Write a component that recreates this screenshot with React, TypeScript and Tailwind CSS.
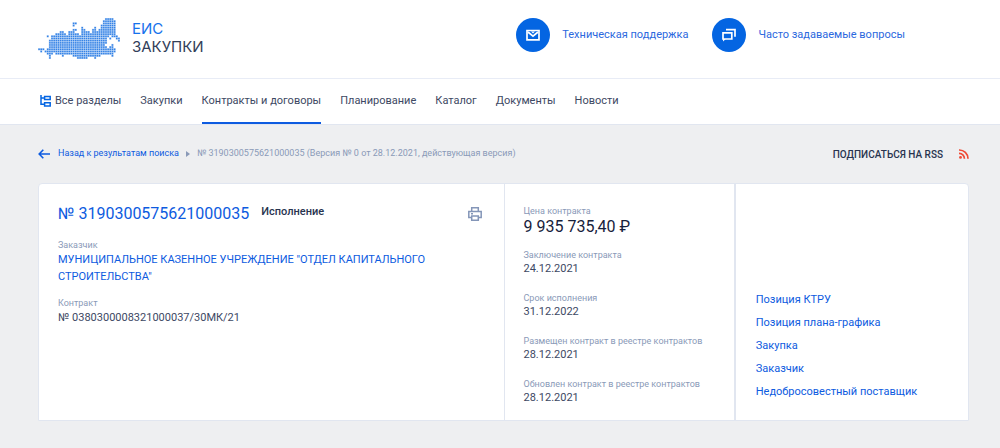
import type { ReactNode } from 'react';

// Filled column ranges of the dotted map, top row first
const mapRows: number[][][] = [
  [[31, 34]],
  [[30, 35]],
  [[16, 17], [30, 35]],
  [[16, 16], [29, 35]],
  [[20, 20], [26, 26], [29, 35]],
  [[16, 17], [20, 21], [25, 26], [28, 35]],
  [[10, 11], [14, 16], [20, 23], [25, 35]],
  [[8, 12], [14, 18], [20, 35]],
  [[4, 4], [6, 32], [34, 36]],
  [[6, 31], [33, 33], [36, 37]],
  [[5, 31], [37, 37]],
  [[5, 31]],
  [[5, 30], [34, 34]],
  [[5, 31], [33, 34]],
  [[0, 2], [4, 35]],
  [[1, 1], [3, 35]],
  [[4, 6], [8, 32], [33, 34]],
  [[5, 5], [11, 11], [16, 28], [34, 34]],
  [[5, 5], [18, 22], [26, 26]],
];

const navLinks = ['Закупки', 'Контракты и договоры', 'Планирование', 'Каталог', 'Документы', 'Новости'];

const dates = [
  { label: 'Заключение контракта', value: '24.12.2021' },
  { label: 'Срок исполнения', value: '31.12.2022' },
  { label: 'Размещен контракт в реестре контрактов', value: '28.12.2021' },
  { label: 'Обновлен контракт в реестре контрактов', value: '28.12.2021' },
];

const relatedLinks = ['Позиция КТРУ', 'Позиция плана-графика', 'Закупка', 'Заказчик', 'Недобросовестный поставщик'];

function Logo() {
  return (
    <a href="#" className="flex items-center gap-3 pt-[6px]">
      <svg viewBox="0 0 38 19" className="h-[41px] w-[82px]" fill="#3583e6" aria-hidden="true">
        <g opacity="0.35">
          {mapRows.map((spans, y) =>
            spans.map(([from, to]) => <rect key={`${y}-${from}`} x={from} y={y} width={to - from + 1} height="1" />),
          )}
        </g>
        {mapRows.map((spans, y) =>
          spans.map(([from, to]) =>
            Array.from({ length: to - from + 1 }, (_, i) => (
              <rect key={`${y}-${from + i}`} x={from + i + 0.15} y={y + 0.15} width="0.7" height="0.7" />
            )),
          ),
        )}
      </svg>
      <span className="font-['Inter',sans-serif] text-[15px] leading-[18px] text-[#334059]">
        <span className="block text-[#1672ec]">ЕИС</span>
        <span className="block">ЗАКУПКИ</span>
      </span>
    </a>
  );
}

function SupportLink({ label, children }: { label: string; children: ReactNode }) {
  return (
    <a href="#" className="flex items-center gap-3 text-[11px] text-[#2b68de]">
      <span className="flex size-[34px] items-center justify-center rounded-full bg-[#0465e2]">
        <svg viewBox="0 0 14 14" className="size-[14px]" fill="none" stroke="#fff" strokeWidth="1.7" aria-hidden="true">
          {children}
        </svg>
      </span>
      {label}
    </a>
  );
}

function Header() {
  return (
    <header className="flex h-[79px] items-center border-b border-[#e8ecf6] pr-[95px] pb-2 pl-[38px]">
      <Logo />
      <div className="ml-auto flex gap-6">
        <SupportLink label="Техническая поддержка">
          <path d="M1 2.5h12v9.3H1z" />
          <path d="M2 4l5 4.2L12 4" />
          <path d="M5 3.5h4L7 5.5z" fill="#fff" stroke="none" />
        </SupportLink>
        <SupportLink label="Часто задаваемые вопросы">
          <path d="M1 4.8h8.8v6.2H1zM4 1.6h9v7.2" />
          <path d="M1 11v2.4L3.8 11z" fill="#fff" stroke="none" />
        </SupportLink>
      </div>
    </header>
  );
}

function Nav() {
  return (
    <nav className="flex h-[45px] gap-[19px] pl-10 text-[11px] leading-[43px] text-[#3d4863]">
      <a href="#" className="flex items-center gap-1 pb-[2px]">
        <svg viewBox="0 0 11 12" className="h-3 w-[11px]" fill="none" stroke="#0465e2" strokeWidth="1.5" aria-hidden="true">
          <path d="M1 0v9.3h3.4M1 2.9h3.4M4.6 1.5h5.6v2.9H4.6zM4.6 7.7h5.6v3.2H4.6z" />
        </svg>
        Все разделы
      </a>
      {navLinks.map((label) => (
        <a
          key={label}
          href="#"
          className={
            label === 'Контракты и договоры' ? 'border-b-2 border-[#0d5be0]' : 'border-b-2 border-transparent'
          }
        >
          {label}
        </a>
      ))}
    </nav>
  );
}

function Breadcrumbs() {
  return (
    <div className="flex h-[58px] items-center text-[9px] text-[#8a9ab8]">
      <a href="#" className="flex items-center gap-2 text-[#0d5be0]">
        <svg viewBox="0 0 12 10" className="h-[10px] w-3" fill="none" stroke="currentColor" strokeWidth="1.6" aria-hidden="true">
          <path d="M12 5H1.2M5.3.8L1.2 5l4.1 4.2" />
        </svg>
        Назад к результатам поиска
      </a>
      <svg viewBox="0 0 4 6" className="mx-[7px] h-[6px] w-1" fill="currentColor" aria-hidden="true">
        <path d="M0 0l4 3-4 3z" />
      </svg>
      <span>№ 3190300575621000035 (Версия № 0 от 28.12.2021, действующая версия)</span>
      <a href="#" className="ml-auto flex items-center gap-4 text-[10px] font-medium text-[#28344f]">
        ПОДПИСАТЬСЯ НА RSS
        <svg viewBox="0 0 10 10" className="size-[10px]" fill="none" stroke="#ef4a35" strokeWidth="1.7" aria-hidden="true">
          <circle cx="1.5" cy="8.4" r="1.4" fill="#ef4a35" stroke="none" />
          <path d="M0 4.3a5.2 5.2 0 0 1 5.4 5.4M0 1a8.7 8.7 0 0 1 9 8.7" />
        </svg>
      </a>
    </div>
  );
}

function PrintButton() {
  return (
    <button type="button" aria-label="Печать" className="ml-auto">
      <svg viewBox="0 0 14 14" className="size-[14px]" fill="none" stroke="#8496b8" strokeWidth="1.5" aria-hidden="true">
        <path d="M3.7 4.2V.8h6.6v3.4M3.5 10.5H.8V4.5h12.4v6h-2.7M3.7 9h6.6v4.2H3.7zM3 6.7h2" />
      </svg>
    </button>
  );
}

function ContractCard() {
  return (
    <main className="grid grid-cols-[2fr_1fr_1fr] rounded-t-sm border border-[#e1e6f0] bg-white text-[11px] text-[#3d4863]">
      <section className="px-[19px] pt-5">
        <div className="flex items-center pr-[3px]">
          <a href="#" className="text-[16px] leading-5 text-[#0d5be0]">
            № 3190300575621000035
          </a>
          <span className="ml-3 pb-1 font-medium text-[#28344f]">Исполнение</span>
          <PrintButton />
        </div>
        <h2 className="mt-[14px] text-[9px] leading-3 text-[#8a9ab8]">Заказчик</h2>
        <a href="#" className="block max-w-[400px] leading-[17px] text-[#0d5be0]">
          МУНИЦИПАЛЬНОЕ КАЗЕННОЕ УЧРЕЖДЕНИЕ "ОТДЕЛ КАПИТАЛЬНОГО СТРОИТЕЛЬСТВА"
        </a>
        <h2 className="mt-3 text-[9px] leading-3 text-[#8a9ab8]">Контракт</h2>
        <p className="leading-[17px]">№ 0380300008321000037/30МК/21</p>
      </section>
      <section className="border-r-2 border-l border-[#e1e6f0] px-[19px] pt-[21px] pb-[14px]">
        <h2 className="text-[9px] leading-3 text-[#8a9ab8]">Цена контракта</h2>
        <p className="text-[16px] leading-5 text-[#17213b]">9 935 735,40 ₽</p>
        <dl className="mt-3 space-y-[15px]">
          {dates.map(({ label, value }) => (
            <div key={label}>
              <dt className="text-[9px] leading-3 text-[#8a9ab8]">{label}</dt>
              <dd className="leading-4">{value}</dd>
            </div>
          ))}
        </dl>
      </section>
      <section className="flex flex-col items-start justify-end gap-[7px] px-5 pb-5 leading-4 text-[#0d5be0]">
        {relatedLinks.map((label) => (
          <a key={label} href="#">
            {label}
          </a>
        ))}
      </section>
    </main>
  );
}

export default function App() {
  return (
    <div className="min-h-screen bg-[#eeeff1] font-['Roboto','Liberation_Sans',sans-serif]">
      <div className="border-b border-[#e1e6f0] bg-white">
        <Header />
        <Nav />
      </div>
      <div className="pr-[31px] pb-7 pl-[38px]">
        <Breadcrumbs />
        <ContractCard />
      </div>
    </div>
  );
}
